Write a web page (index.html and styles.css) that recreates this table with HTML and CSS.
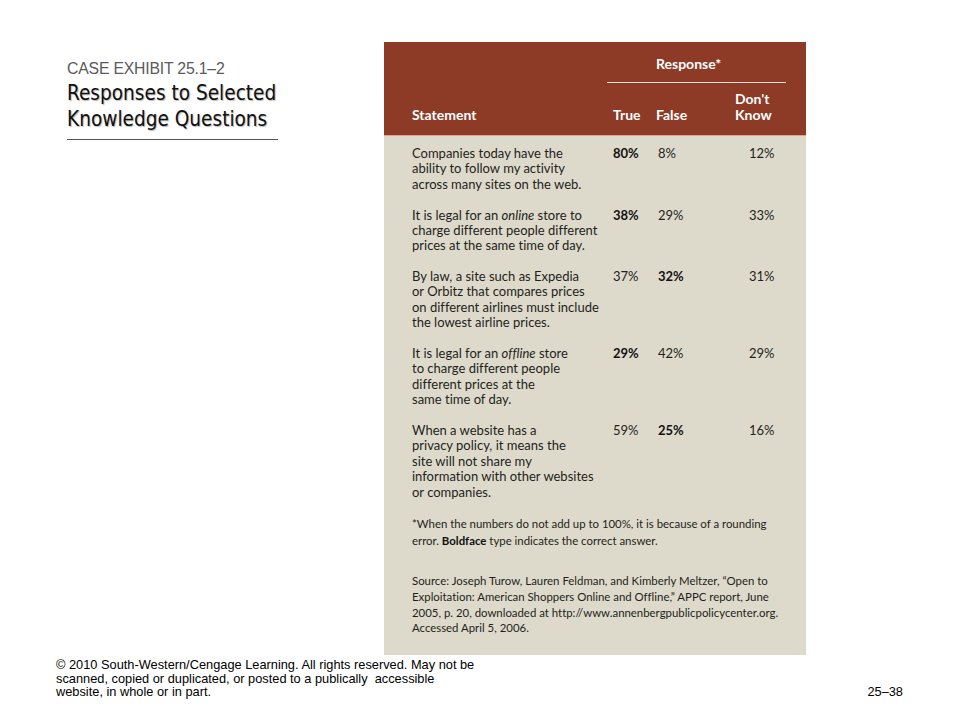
FILE: index.html
```html
<!DOCTYPE html>
<html>
<head>
<meta charset="utf-8">
<link rel="stylesheet" href="styles.css">
</head>
<body>
<div class="page">
  <div class="main">
    <div class="title-block">
      <div class="kicker">CASE EXHIBIT 25.1–2</div>
      <h1 class="title">Responses to Selected<br>Knowledge Questions</h1>
      <div class="rule"></div>
    </div>
    <div class="exhibit">
      <div class="head">
        <div class="head-top">
          <div class="response">Response*</div>
          <div class="response-line"></div>
        </div>
        <div class="head-cols">
          <div class="hc hc-stmt">Statement</div>
          <div class="hc hc-true">True</div>
          <div class="hc hc-false">False</div>
          <div class="hc hc-dk">Don't<br>Know</div>
        </div>
      </div>
      <div class="body">
        <div class="row">
          <div class="stmt">Companies today have the<br>ability to follow my activity<br>across many sites on the web.</div>
          <div class="val"><b>80%</b></div>
          <div class="val">8%</div>
          <div class="val">12%</div>
        </div>
        <div class="row">
          <div class="stmt">It is legal for an <i>online</i> store to<br>charge different people different<br>prices at the same time of day.</div>
          <div class="val"><b>38%</b></div>
          <div class="val">29%</div>
          <div class="val">33%</div>
        </div>
        <div class="row">
          <div class="stmt">By law, a site such as Expedia<br>or Orbitz that compares prices<br>on different airlines must include<br>the lowest airline prices.</div>
          <div class="val">37%</div>
          <div class="val"><b>32%</b></div>
          <div class="val">31%</div>
        </div>
        <div class="row">
          <div class="stmt">It is legal for an <i>offline</i> store<br>to charge different people<br>different prices at the<br>same time of day.</div>
          <div class="val"><b>29%</b></div>
          <div class="val">42%</div>
          <div class="val">29%</div>
        </div>
        <div class="row">
          <div class="stmt">When a website has a<br>privacy policy, it means the<br>site will not share my<br>information with other websites<br>or companies.</div>
          <div class="val">59%</div>
          <div class="val"><b>25%</b></div>
          <div class="val">16%</div>
        </div>
        <p class="note">*When the numbers do not add up to 100%, it is because of a rounding<br>error. <b>Boldface</b> type indicates the correct answer.</p>
        <p class="source">Source: Joseph Turow, Lauren Feldman, and Kimberly Meltzer, “Open to<br>Exploitation: American Shoppers Online and Offline,” APPC report, June<br>2005, p. 20, downloaded at http://www.annenbergpublicpolicycenter.org.<br>Accessed April 5, 2006.</p>
      </div>
    </div>
  </div>
  <div class="footer">
    <div class="copy">© 2010 South-Western/Cengage Learning. All rights reserved. May not be<br>scanned, copied or duplicated, or posted to a publically&nbsp; accessible<br>website, in whole or in part.</div>
    <div class="pageno">25–38</div>
  </div>
</div>
</body>
</html>
```

FILE: styles.css
```css
* { box-sizing: border-box; }
html, body { margin: 0; padding: 0; background: #fff; }
.page {
  width: 960px;
  height: 720px;
  display: flex;
  flex-direction: column;
}
.main {
  display: flex;
  padding: 42px 0 0 67px;
}
.title-block {
  width: 211px;
  padding-top: 18px;
}
.kicker {
  font-family: "Liberation Sans", Arial, sans-serif;
  font-size: 15.8px;
  letter-spacing: -0.2px;
  color: #5a5a5a;
  line-height: 18px;
}
.title {
  margin: 2px 0 0;
  font-family: "DejaVu Sans Condensed", "DejaVu Sans", sans-serif;
  font-weight: normal;
  font-size: 20.6px;
  line-height: 26px;
  color: #111;
  text-shadow: 1px 1px 1px rgba(0,0,0,0.28);
  white-space: nowrap;
}
.rule {
  margin-top: 7px;
  height: 1px;
  background: #555;
}
.exhibit {
  margin-left: 106px;
  width: 422px;
  height: 613px;
  background: #dedacb;
  font-family: Lato, "Open Sans", sans-serif;
  font-variant-ligatures: none;
  color: #231f20;
  display: flex;
  flex-direction: column;
}
.head {
  background: #8d3a26;
  height: 94px;
  border-bottom: 1px solid #d9a58c;
  color: #fff;
  font-weight: bold;
  font-size: 14px;
}
.head-top {
  padding: 14px 0 0 223px;
}
.response {
  padding-left: 49px;
  line-height: 16px;
}
.response-line {
  margin-top: 10px;
  width: 179px;
  height: 1px;
  background: #f1dcd3;
}
.head-cols {
  display: grid;
  grid-template-columns: 201px 43px 79px 1fr;
  padding-left: 28px;
  margin-top: 8px;
  align-items: end;
  line-height: 15.5px;
}
.body {
  padding: 10px 0 0 28px;
  font-size: 13px;
}
.row {
  display: grid;
  grid-template-columns: 201px 45px 91px 1fr;
  line-height: 15.4px;
  margin-bottom: 15.3px;
  white-space: nowrap;
}
.val b, .note b { font-weight: bold; color: #111; }
.note {
  margin: 0;
  font-size: 11.4px;
  line-height: 17px;
  white-space: nowrap;
}
.source {
  margin: 24px 0 0;
  font-size: 11.4px;
  line-height: 15.7px;
  white-space: nowrap;
}
.footer {
  display: flex;
  justify-content: space-between;
  align-items: flex-end;
  padding: 3px 57px 0 56px;
  font-family: "Liberation Sans", Arial, sans-serif;
  font-size: 12.8px;
  line-height: 13.5px;
  color: #000;
}
```
